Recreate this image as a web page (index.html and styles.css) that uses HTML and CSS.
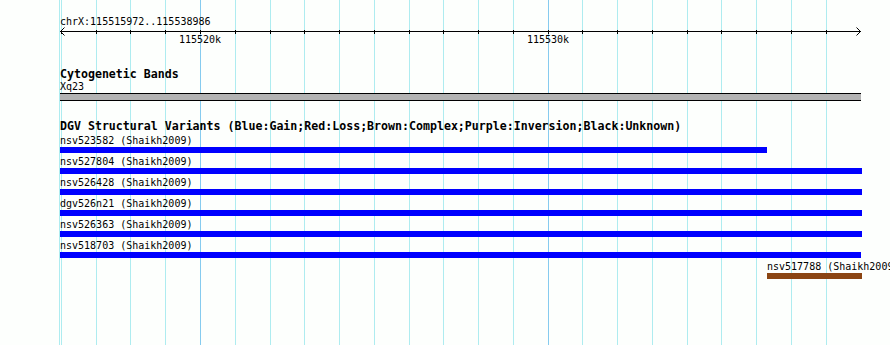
FILE: index.html
```html
<!DOCTYPE html>
<html lang="en">
<head>
  <meta charset="utf-8" />
  <title>chrX:115515972..115538986</title>
  <link rel="stylesheet" href="styles.css">
</head>
<body>
  <main class="panel">
    <div class="grid" id="grid"></div>

    <div class="ruler">
      <div class="ruler-title">chrX:115515972..115538986</div>
      <svg class="axis" id="axis" width="890" height="7" shape-rendering="crispEdges"></svg>
      <div class="ruler-labels" id="ruler-labels"></div>
    </div>

    <section class="track band-track">
      <div class="track-title">Cytogenetic Bands</div>
      <div class="feature-label">Xq23</div>
      <div class="band"></div>
    </section>

    <section class="track dgv-track">
      <div class="track-title">DGV Structural Variants (Blue:Gain;Red:Loss;Brown:Complex;Purple:Inversion;Black:Unknown)</div>

      <div class="feature">
        <div class="feature-label">nsv523582 (Shaikh2009)</div>
        <div class="bar gain" style="width: 707px"></div>
      </div>
      <div class="feature">
        <div class="feature-label">nsv527804 (Shaikh2009)</div>
        <div class="bar gain" style="width: 802px"></div>
      </div>
      <div class="feature">
        <div class="feature-label">nsv526428 (Shaikh2009)</div>
        <div class="bar gain" style="width: 802px"></div>
      </div>
      <div class="feature">
        <div class="feature-label">dgv526n21 (Shaikh2009)</div>
        <div class="bar gain" style="width: 802px"></div>
      </div>
      <div class="feature">
        <div class="feature-label">nsv526363 (Shaikh2009)</div>
        <div class="bar gain" style="width: 802px"></div>
      </div>
      <div class="feature">
        <div class="feature-label">nsv518703 (Shaikh2009)</div>
        <div class="bar gain" style="width: 801px"></div>
      </div>
      <div class="feature" style="margin-left: 707px">
        <div class="feature-label">nsv517788 (Shaikh2009)</div>
        <div class="bar complex" style="width: 95px"></div>
      </div>
    </section>
  </main>

  <script>
    (function () {
      const start = 115515972;
      const end = 115538986;
      const left = 60;
      const width = 800;
      const grid = document.getElementById('grid');
      const axis = document.getElementById('axis');
      const labels = document.getElementById('ruler-labels');
      const NS = 'http://www.w3.org/2000/svg';

      function px(bp) { return Math.round(left + (bp - start) * width / (end - start)); }

      function gridLine(x, major) {
        const line = document.createElement('div');
        line.className = major ? 'grid-line major' : 'grid-line';
        line.style.left = x + 'px';
        grid.appendChild(line);
      }

      function svgEl(name, attrs) {
        const el = document.createElementNS(NS, name);
        for (const k in attrs) el.setAttribute(k, attrs[k]);
        axis.appendChild(el);
      }

      // axis line with arrows at both ends
      svgEl('rect', { x: left, y: 3, width: width + 1, height: 1, fill: '#000' });
      svgEl('path', { d: 'M64.5 -0.5 L60.5 3.5 L64.5 7.5', fill: 'none', stroke: '#000', 'shape-rendering': 'auto' });
      svgEl('path', { d: 'M856.5 -0.5 L860.5 3.5 L856.5 7.5', fill: 'none', stroke: '#000', 'shape-rendering': 'auto' });

      gridLine(59, false);

      for (let kb = Math.ceil(start / 1000); kb * 1000 <= end; kb++) {
        const x = px(kb * 1000);
        const major = kb % 10 === 0;
        gridLine(x, major);
        svgEl('rect', { x: x, y: 2, width: 1, height: 4, fill: '#000' });
        if (major) {
          const label = document.createElement('span');
          label.className = 'tick-label';
          label.style.left = x + 'px';
          label.textContent = kb + 'k';
          labels.appendChild(label);
        }
      }
    })();
  </script>
</body>
</html>
```

FILE: styles.css
```css
:root {
  --bg: #fdfffd;
  --grid: #aeecf0;
  --grid-major: #86cbef;
  --text: #000;
  --gain: #0000ff;
  --complex: #8b4513;
  --band: #b3b3b3;
}
* { box-sizing: border-box; }
html, body {
  margin: 0;
  height: 100%;
  overflow: hidden;
  background: var(--bg);
  color: var(--text);
  font-family: "DejaVu Sans Mono", "Liberation Mono", monospace;
  font-size: 10px;
}
.panel {
  position: relative;
  width: 890px;
  height: 345px;
  overflow: hidden;
  padding-top: 15px;
}
.grid { position: absolute; inset: 0; }
.grid-line {
  position: absolute;
  top: 0; bottom: 0;
  width: 1px;
  background: var(--grid);
}
.grid-line.major { background: var(--grid-major); }

.ruler, .track { position: relative; }
.ruler-title { padding-left: 60px; line-height: 13px; white-space: nowrap; }
.axis { display: block; overflow: visible; }
.ruler-labels { position: relative; height: 13px; margin-top: -2px; }
.tick-label {
  position: absolute; top: 0;
  line-height: 13px;
  transform: translateX(-50%);
  white-space: nowrap;
}

.track { padding-left: 60px; }
.band-track { margin-top: 22px; }
.dgv-track { margin-top: 19px; }
.track-title {
  font-weight: bold;
  font-size: 11.6px;
  line-height: 13px;
  white-space: nowrap;
}
.dgv-track .track-title { margin-bottom: 2px; }
.feature-label { line-height: 12px; white-space: nowrap; }
.band {
  height: 8px;
  width: 801px;
  background: var(--band);
  border-top: 1px solid #000;
  border-bottom: 1px solid #000;
}
.feature { margin-bottom: 3px; }
.bar { height: 6px; }
.bar.gain { background: var(--gain); }
.bar.complex { background: var(--complex); }
```
